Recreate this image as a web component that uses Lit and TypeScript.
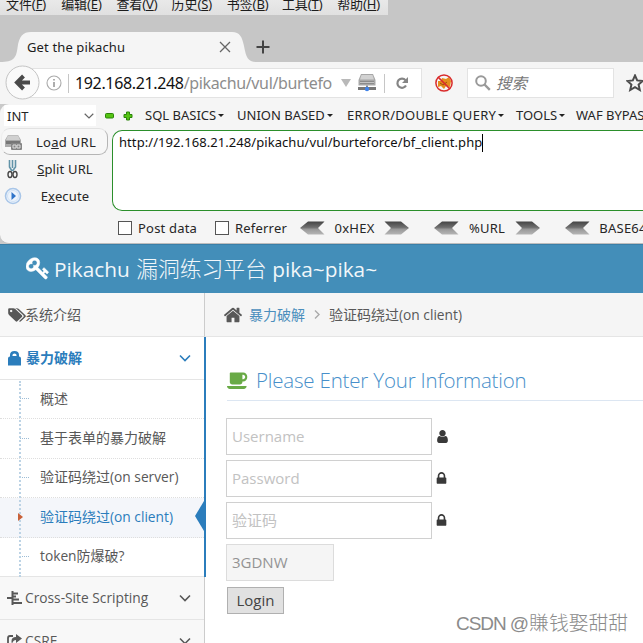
import { LitElement, html, svg, css } from "lit";
import { customElement } from "lit/decorators.js";

const icon = (cls: string, box: string, body: unknown) =>
  html`<svg class="ic ${cls}" viewBox=${box} preserveAspectRatio="none">${body}</svg>`;

const LOCK = svg`<path fill="currentColor" d="M640 768h512v-192q0-106-75-181t-181-75-181 75-75 181v192zm832 96v576q0 40-28 68t-68 28h-960q-40 0-68-28t-28-68v-576q0-40 28-68t68-28h32v-192q0-184 132-316t316-132 316 132 132 316v192h32q40 0 68 28t28 68z"/>`;
const USER = svg`<path fill="currentColor" d="M1536 1399q0 109-62.500 187t-150.500 78h-854q-88 0-150.500-78t-62.500-187q0-85 8.500-160.500t31.500-152 58.500-131 94-89 134.500-34.500q131 128 313 128t313-128q76 0 134.500 34.500t94 89 58.500 131 31.500 152 8.500 160.500zm-256-887q0 159-112.500 271.500t-271.500 112.500-271.500-112.500-112.500-271.500 112.500-271.500 271.500-112.500 271.500 112.500 112.500 271.500z"/>`;
const HOME = svg`<path fill="currentColor" d="M1472 992v480q0 26-19 45t-45 19h-384v-384h-256v384h-384q-26 0-45-19t-19-45v-480q0-1 .5-3t.5-3l575-474 575 474q1 2 1 6zm223-69l-62 74q-8 9-21 11h-3q-13 0-21-7l-692-577-692 577q-12 8-24 7-13-2-21-11l-62-74q-8-10-7-23.500t11-21.500l719-599q32-26 76-26t76 26l244 204v-195q0-14 9-23t23-9h192q14 0 23 9t9 23v408l219 182q10 8 11 21.500t-7 23.500z"/>`;
const TAGS = svg`<path fill="currentColor" d="M576 448q0-53-37.500-90.500t-90.500-37.500-90.500 37.500-37.500 90.500 37.500 90.500 90.500 37.500 90.500-37.500 37.500-90.500zm1067 576q0 53-37 90l-491 492q-39 37-91 37-53 0-90-37l-715-716q-38-37-64.500-101t-26.500-117v-416q0-52 38-90t90-38h416q53 0 117 26.500t102 64.500l715 714q37 39 37 91zm384 0q0 53-37 90l-491 492q-39 37-91 37-36 0-59-14t-53-45l470-470q37-37 37-90 0-52-37-91l-715-714q-38-38-102-64.500t-117-26.500h224q53 0 117 26.500t102 64.500l715 714q37 39 37 91z"/>`;
const COFFEE = svg`<path fill="currentColor" d="M1664 512q0-80-56-136t-136-56h-64v384h64q80 0 136-56t56-136zm-1664 768h1792q0 106-75 181t-181 75h-1280q-106 0-181-75t-75-181zm1856-768q0 159-112.500 271.500t-271.500 112.500h-64v32q0 92-66 158t-158 66h-704q-92 0-158-66t-66-158v-736q0-26 19-45t45-19h1152q159 0 271.500 112.500t112.500 271.500z"/>`;
const KEY = svg`<path fill="currentColor" stroke="currentColor" stroke-width="40" d="M832 512q0-80-56-136t-136-56-136 56-56 136q0 42 19 83-41-19-83-19-80 0-136 56t-56 136 56 136 136 56 136-56 56-136q0-42-19-83 41 19 83 19 80 0 136-56t56-136zm851 704q0 17-49 66t-66 49q-9 0-28.500-16t-36.500-33-38.500-40-24.500-26l-96 96 220 220q28 28 28 68 0 42-39 81t-81 39q-40 0-68-28l-671-671q-176 131-365 131-163 0-265.500-102.500t-102.500-265.500q0-160 95-313t248-248 313-95q163 0 265.500 102.500t102.500 265.500q0 189-131 365l355 355 96-96q-3-3-26-24.500t-40-38.500-33-36.500-16-28.500q0-17 49-66t66-49q13 0 23 10 6 6 46 44.500t82 79.500 86.500 86 73 78 28.500 41z"/>`;

@customElement("browser-chrome")
class BrowserChrome extends LitElement {
  static styles = css`
    :host { display: block; width: 643px; height: 104px; background: #c6c6c6; overflow: hidden; color: #1c1c1c;
      font-family: "Noto Sans", "Noto Sans CJK SC", sans-serif; }
    .ic { display: block; flex: none; }
    .menu { display: flex; width: 388px; height: 15px; box-sizing: border-box; padding-left: 6px;
      background: linear-gradient(#e9e9e9, #e0e0e0); }
    .menu span { flex: none; width: 55.2px; font: 13px/19px "Noto Sans", "Noto Sans CJK SC", sans-serif;
      margin-top: -5px; white-space: nowrap; letter-spacing: -0.1px; }
    .tabs { display: flex; height: 47px; align-items: flex-end; }
    .tab { position: relative; display: flex; align-items: center; width: 256px; height: 31px; }
    .shape { position: absolute; left: 0; top: 0; width: 256px; height: 31px; }
    .title { position: relative; margin-left: 27px; width: 192px; font-size: 13px; line-height: 18px; letter-spacing: 0.13px; }
    .close { position: relative; width: 12px; height: 12px; }
    .plus { width: 14px; height: 14px; margin: 0 0 8px 0; }
    .nav { display: flex; height: 42px; background: #f5f5f5; padding-left: 5px; }
    .back { position: relative; z-index: 1; width: 35px; height: 35px; margin-top: 3px; }
    .url { display: flex; flex: none; align-items: center; box-sizing: border-box; height: 30px; width: 401px; margin: 6px 0 0 -19px;
      padding-left: 24px; background: #fff; border: 1px solid #e3e3e3; }
    .info { width: 16px; height: 16px; }
    .sep { width: 1px; height: 19px; background: #c6c6c6; flex: none; }
    .sep.first { margin-left: 6px; }
    .addr { margin-left: 6px; flex: none; width: 264px; font-size: 16px; line-height: 22px; color: #111; white-space: nowrap; letter-spacing: -0.35px; }
    .addr i { font-style: normal; color: #8d8d8d; }
    .drop { width: 10px; height: 8px; margin-left: 2px; }
    .server { width: 18px; height: 18px; margin: 0 8px 0 7px; }
    .reload { width: 14px; height: 14px; margin-left: 10px; }
    .fox { width: 20px; height: 20px; margin: 11px 13px 0 12px; }
    .search { display: flex; flex: none; align-items: center; box-sizing: border-box; width: 147px; height: 30px; margin-top: 6px;
      background: #fff; border: 1px solid #e3e3e3; padding-left: 7px; font-size: 15.5px; color: #777; font-style: italic; }
    .search span { margin-top: -2px; }
    .mag { width: 16px; height: 16px; margin-right: 5px; }
    .star { width: 18px; height: 18px; margin: 12px 0 0 12px; }
  `;
  render() {
    const menu = [["文件", "F"], ["编辑", "E"], ["查看", "V"], ["历史", "S"], ["书签", "B"], ["工具", "T"], ["帮助", "H"]];
    return html`
      <div class="menu">${menu.map(([t, k]) => html`<span>${t}(<u>${k}</u>)</span>`)}</div>
      <div class="tabs">
        <div class="tab">
          ${icon("shape", "0 0 256 31", svg`<path fill="#f5f5f5" d="M0 31C14 31 16 27 17.500 17C19 5 23 1 31 1H232C240 1 242 6 244 15C246 26 248 31 256 31Z"/>`)}
          <span class="title">Get the pikachu</span>
          ${icon("close", "0 0 12 12", svg`<path d="M1 1L11 11M11 1L1 11" stroke="#666" stroke-width="1.3"/>`)}
        </div>
        ${icon("plus", "0 0 14 14", svg`<path d="M7 .5V13.500M.5 7H13.500" stroke="#444" stroke-width="2"/>`)}
      </div>
      <div class="nav">
        ${icon("back", "0 0 35 35", svg`<circle cx="17.500" cy="17.500" r="16.500" fill="#fafafa" stroke="#c4c4c4"/><path d="M25 17.500H13M18.500 11L12 17.500L18.500 24" fill="none" stroke="#4a4a4a" stroke-width="4"/>`)}
        <div class="url">
          ${icon("info", "0 0 16 16", svg`<circle cx="8" cy="8" r="7" fill="none" stroke="#aaa" stroke-width="1.100"/><path d="M8 7V12M8 4V5.600" stroke="#999" stroke-width="1.600"/>`)}
          <div class="sep first"></div>
          <div class="addr">192.168.21.248<i>/pikachu/vul/burtefo</i></div>
          ${icon("drop", "0 0 10 8", svg`<path d="M0 0H10L5 8Z" fill="#b9b9b9"/>`)}
          ${icon("server", "0 0 18 18", svg`<path d="M3 0H15L17.500 6V11.500H.5V6Z" fill="#a7a7a7"/><path d="M3.500 1H14.500L16 5.500H2Z" fill="#d2d2d2"/><rect x="2" y="7" width="14" height="3" fill="#8b8b8b"/><path d="M2 8.500H16" stroke="#ddd" stroke-width=".7"/><rect y="13" width="18" height="3" fill="#777"/><rect x="8" y="11.500" width="2" height="2" fill="#888"/><circle cx="9" cy="15" r="2.200" fill="#4083e8"/>`)}
          <div class="sep"></div>
          ${icon("reload", "0 0 14 14", svg`<path d="M10.500 4.200A4.600 4.600 0 1 0 11 9.500" fill="none" stroke="#858585" stroke-width="2.200"/><path d="M13 1V7H7Z" fill="#858585"/>`)}
        </div>
        ${icon("fox", "0 0 20 20", svg`<path d="M4 8L7 8L8 5L12 6L15 4L17 8L16 14L12 13L10 16L7 13L4 14Z" fill="#e48c1c"/><path d="M6 10L9 12L13 9" stroke="#9d4e10" fill="none"/><circle cx="10" cy="10" r="8.100" fill="none" stroke="#d92b2b" stroke-width="1.500"/><path d="M4 4L16 16" stroke="#d92b2b" stroke-width="1.700"/>`)}
        <div class="search">
          ${icon("mag", "0 0 16 16", svg`<circle cx="6" cy="6" r="4.800" fill="none" stroke="#999" stroke-width="2"/><path d="M9.500 9.500L14.800 14.800" stroke="#999" stroke-width="2.400"/>`)}
          <span>搜索</span>
        </div>
        ${icon("star", "0 0 18 18", svg`<path d="M9 1.500L11.200 6.400L16.600 7L12.600 10.600L13.800 16L9 13.200L4.200 16L5.400 10.600L1.400 7L6.800 6.400Z" fill="none" stroke="#4c4c4c" stroke-width="2"/>`)}
      </div>`;
  }
}

@customElement("hack-bar")
class HackBar extends LitElement {
  static styles = css`
    :host { display: block; width: 643px; height: 140px; background: #c9c9c9; overflow: hidden; color: #262626;
      font: 13px/18px "Noto Sans", sans-serif; white-space: nowrap; }
    .ic { display: block; flex: none; }
    .wrap { height: 139px; background: #f5f5f5; border-radius: 9px 0 0 9px; overflow: hidden; border-bottom: 1px solid #bdbdbd; }
    .top { display: flex; height: 23px; align-items: center; padding-left: 4px; }
    .sel { display: flex; flex: none; align-items: center; justify-content: space-between; box-sizing: border-box; width: 92px; height: 21px;
      background: #fff; padding: 0 2px 0 3px; }
    .chev { width: 10px; height: 6px; }
    .minus { width: 9px; height: 6px; margin-left: 9px; }
    .add { width: 10px; height: 10px; margin: 0 12px 0 9px; }
    .m { display: flex; align-items: center; flex: none; margin-top: -1px; }
    .m::after { content: ""; border: 3px solid transparent; border-top-color: #222; border-bottom: 0; margin-left: 2px; }
    .m1 { width: 92px; } .m2 { width: 110px; } .m3 { width: 169px; letter-spacing: .3px; } .m4 { width: 60px; } .m5 { width: 90px; }
    .mid { display: flex; height: 84px; }
    .left { width: 112px; flex: none; }
    .act { display: flex; align-items: center; box-sizing: border-box; height: 27px; padding-left: 3px; }
    .act.load { border: 1px solid #b5b5b5; border-left-color: #eee; border-top-color: #e2e2e2; border-radius: 9px; width: 107px; margin: 1px 0 0 1px;
      padding-left: 1px; background: #f7f7f7; }
    .act span { flex: none; width: 80px; text-align: center; margin-left: 2px; letter-spacing: .15px; }
    .act.load span { margin-left: 3px; letter-spacing: .3px; }
    .aic { width: 20px; height: 20px; }
    .box { box-sizing: border-box; flex: 1; height: 81px; margin-top: 3px; border: 1px solid #2b8f2b; border-right: 0; border-radius: 10px 0 0 10px;
      background: #fff; padding: 3px 0 0 6px; color: #111; display: flex; align-items: flex-start; }
    .txt { letter-spacing: .07px; margin-top: -1px; }
    .caret { width: 1px; height: 18px; background: #000; }
    .bot { display: flex; height: 32px; align-items: center; padding-left: 118px; padding-top: 1px; box-sizing: border-box; }
    .ck { box-sizing: border-box; width: 14px; height: 14px; border: 1px solid #555; background: #fff; flex: none; }
    .b1, .b2 { box-sizing: border-box; padding-left: 6px; flex: none; letter-spacing: .2px; }
    .b1 { width: 83px; } .b2 { width: 71px; }
    .arr { width: 25px; height: 14px; }
    .cv { text-align: center; flex: none; letter-spacing: .25px; }
    .w1 { width: 59px; } .w2 { width: 56px; } .w3 { width: 66px; }
    .gap { width: 25px; flex: none; }
  `;
  render() {
    const grad = svg`<defs><linearGradient id="g" x1="0" y1="0" x2="0" y2="1"><stop offset="0" stop-color="#444"/><stop offset=".45" stop-color="#6f6f6f"/><stop offset=".6" stop-color="#999"/><stop offset="1" stop-color="#b5b5b5"/></linearGradient></defs>`;
    const la = icon("arr", "0 0 25 14", svg`${grad}<path d="M0 7L8 .5H24.500L18 7L24.500 13.500H8Z" fill="url(#g)"/>`);
    const ra = icon("arr", "0 0 25 14", svg`${grad}<path d="M25 7L17 .5H.5L7 7L.5 13.500H17Z" fill="url(#g)"/>`);
    return html`<div class="wrap">
      <div class="top">
        <div class="sel"><span>INT</span>${icon("chev", "0 0 10 6", svg`<path d="M.7.8L5 5L9.300.8" fill="none" stroke="#666" stroke-width="1.200"/>`)}</div>
        ${icon("minus", "0 0 9 6", svg`<rect x=".5" y=".5" width="8" height="4.500" rx="1" fill="#55c413" stroke="#2a8508"/>`)}
        ${icon("add", "0 0 10 10", svg`<path d="M3.500 1H6.500V3.500H9V6.500H6.500V9H3.500V6.500H1V3.500H3.500Z" fill="#55c413" stroke="#2a8508"/>`)}
        <span class="m m1">SQL BASICS</span><span class="m m2">UNION BASED</span><span class="m m3">ERROR/DOUBLE QUERY</span><span class="m m4">TOOLS</span><span class="m m5">WAF BYPASS</span>
      </div>
      <div class="mid">
        <div class="left">
          <div class="act load">${icon("aic", "0 0 20 20", svg`<path d="M5 3H15L18 8V15H2V8Z" fill="#aaa"/><path d="M5 3.500H15L17 8H3Z" fill="#d0d0d0"/><rect x="3" y="9" width="14" height="3" fill="#777"/><rect x="8" y="11" width="11" height="7" rx="1" fill="#858585"/><path d="M10 13H13V16H10ZM14 13H17V16H14Z" fill="none" stroke="#ddd"/>`)}<span>Lo<u>a</u>d URL</span></div>
          <div class="act">${icon("aic", "0 0 20 20", svg`<path d="M6.500 1V8L9 12M12.500 1V8L9.500 12M9.500 1V9" fill="none" stroke="#6293a8" stroke-width="1.600"/><ellipse cx="7" cy="15.500" rx="2" ry="3" fill="none" stroke="#444" stroke-width="1.400"/><ellipse cx="12" cy="15.500" rx="2" ry="3" fill="none" stroke="#444" stroke-width="1.400"/>`)}<span><u>S</u>plit URL</span></div>
          <div class="act">${icon("aic", "0 0 20 20", svg`<circle cx="10" cy="10" r="7.500" fill="#edf4fc" stroke="#a9c6e8" stroke-width="1.600"/><circle cx="10" cy="10" r="5.500" fill="none" stroke="#d2e2f5"/><path d="M8.500 6L13 10L8.500 14Z" fill="#2f74c9"/>`)}<span>E<u>x</u>ecute</span></div>
        </div>
        <div class="box"><span class="txt">http://192.168.21.248/pikachu/vul/burteforce/bf_client.php</span><div class="caret"></div></div>
      </div>
      <div class="bot">
        <div class="ck"></div><span class="b1">Post data</span>
        <div class="ck"></div><span class="b2">Referrer</span>
        ${la}<span class="cv w1">0xHEX</span>${ra}<div class="gap"></div>
        ${la}<span class="cv w2">%URL</span>${ra}<div class="gap"></div>
        ${la}<span class="cv w3">BASE64</span>
      </div>
    </div>`;
  }
}

@customElement("pikachu-page")
class PikachuPage extends LitElement {
  static styles = css`
    :host { display: block; position: relative; width: 643px; height: 399px; background: #fff; overflow: hidden; color: #585858;
      font: 13.75px/20px "Open Sans", "Noto Sans CJK SC", sans-serif; white-space: nowrap; }
    .ic { display: block; flex: none; }
    .head { display: flex; align-items: center; height: 49px; box-sizing: border-box; background: #438eb9; color: #fff; padding-left: 26px;
      font-size: 20.8px; line-height: 30px; border-top: 1px solid #3a7fa8; }
    .key { width: 24px; height: 24px; margin: 0 4px 2px 0; }
    .ttl { font-weight: 400; opacity: .93; }
    .ttl b { font-weight: 300; font-size: 21.8px; margin-left: 1px; }
    .body { display: flex; height: 350px; }
    .side { width: 204px; flex: none; background: #f2f2f2; box-sizing: border-box; }
    .rail { width: 2px; flex: none; display: flex; flex-direction: column; }
    .r0 { height: 44px; } .r1 { height: 240px; background: #2b7dbc; } .r2 { flex: 1; }
    .r0, .r2 { border-left: 1px solid #ccc; } .r0 { background: #f5f5f5; box-sizing: border-box; border-bottom: 1px solid #e5e5e5; }
    .cjk { font-size: 14px; }
    .it { display: flex; align-items: center; height: 43px; box-sizing: border-box; background: #f8f8f8; padding: 0 13px 0 7px; border-bottom: 1px solid #e5e5e5; }
    .it.first { height: 44px; }
    .it.open { background: #fff; color: #2b7dbc; font-weight: 700; }
    .it .lab { flex: 1; }
    .tags { width: 19px; height: 16px; margin-right: -1px; }
    .bag { width: 15px; height: 15px; margin-right: 4px; }
    .tree { width: 15px; height: 14px; margin-right: 3px; }
    .share { width: 15px; height: 14px; margin-right: 3px; }
    .chev { width: 12px; height: 8px; }
    .sub { position: relative; background: #fff; height: 197px; }
    .sub::before { content: ""; position: absolute; z-index: 1; left: 19px; top: 1px; bottom: 0; border-left: 2px dotted #bcd3e5; }
    .row { position: relative; display: flex; align-items: center; height: 39.4px; box-sizing: border-box; padding: 0 0 1px 20px; border-bottom: 1px dotted #dedede; }
    .row:last-child { border-bottom: 1px solid #e5e5e5; }
    .row::before { content: ""; width: 9px; border-top: 1px dotted #9dbdd6; margin-right: 11px; }
    .row.on { background: #f4f6fa; color: #2b7dbc; }
    .row.on::before { width: 0; border: 4px solid transparent; border-left: 5px solid #c86139; border-right: 0; margin-left: -2px; margin-right: 17px; z-index: 2; }
    .row.on::after { content: ""; position: absolute; right: 0; top: 3px; border: 15px solid transparent; border-right: 9px solid #2b7dbc; border-left: 0; }
    .main { flex: 1; }
    .crumb { display: flex; align-items: center; height: 44px; box-sizing: border-box; background: #f5f5f5; border-bottom: 1px solid #e5e5e5; padding-left: 17px; }
    .home { width: 20px; height: 20px; margin-right: 6px; }
    .link { color: #4c8fbd; }
    .cr { width: 6px; height: 9px; margin: 0 9px 0 9px; }
    .form { padding-left: 20px; }
    .h { display: flex; align-items: center; height: 64px; box-sizing: border-box; padding-top: 23px; border-bottom: 1px solid #dce6f2; margin-left: 1px; color: #478fca; font-size: 20.5px; font-weight: 300; letter-spacing: -.19px; }
    .cup { width: 21px; height: 21px; color: #69aa46; margin: 2px 8px 0 0; }
    .f { display: flex; align-items: center; height: 37px; margin-bottom: 5px; }
    .h + .f { margin-top: 17px; }
    .in { box-sizing: border-box; width: 206px; height: 37px; border: 1px solid #d0d0d0; background: #fff; color: #c2c2c2; font-size: 15px; line-height: 34px; padding-left: 5px; margin-right: 3px; }
    .in.cap { width: 108px; background: #f5f5f5; color: #939393; border-color: #dcdcdc; }
    .fi { width: 15px; height: 15px; color: #393939; }
    .fi.lk { margin-left: -1px; }
    .btn { box-sizing: border-box; width: 57px; height: 27px; margin: 6px 0 0 1px; border: 1px solid #b0b0b0; background: #e1e1e1; color: #444; font-size: 15px; line-height: 25px; text-align: center; }
    .f.last { margin-bottom: 0; }
    .wm { position: absolute; left: 456px; top: 366px; font: 19.8px/26px "Liberation Sans", "Noto Sans CJK SC", sans-serif; font-weight: 300; color: #8b8b8b; }
    .wm span { font-size: 19px; letter-spacing: -1.05px; margin-right: 1px; }
  `;
  render() {
    const chev = icon("chev", "0 0 12 8", svg`<path d="M1 1.500L6 6.500L11 1.500" fill="none" stroke="currentColor" stroke-width="1.600"/>`);
    const rows: [string, string][] = [["概述", ""], ["基于表单的暴力破解", ""], ["验证码绕过", "(on server)"], ["验证码绕过", "(on client)"]];
    return html`
      <div class="head">${icon("key", "0 0 1792 1792", KEY)}<span class="ttl">Pikachu <b>漏洞练习平台</b> pika~pika~</span></div>
      <div class="body">
        <div class="side">
          <div class="it first">${icon("tags", "0 0 2048 1792", TAGS)}<span class="cjk lab">系统介绍</span></div>
          <div class="it open">${icon("bag", "0 0 15 15", svg`<path d="M1 14.500V7.500Q1 5.500 3 5.500V4Q3 0 7.500 0Q12 0 12 4V5.500Q14 5.500 14 7.500V14.500ZM5.500 5H9.500V4Q9.500 2.500 7.500 2.500Q5.500 2.500 5.500 4Z" fill="currentColor" fill-rule="evenodd"/>`)}<span class="cjk lab">暴力破解</span>${chev}</div>
          <div class="sub">
            ${rows.map(([a, b], i) => html`<div class="row ${i === 3 ? "on" : ""}"><span><span class="cjk">${a}</span>${b}</span></div>`)}
            <div class="row"><span>token<span class="cjk">防爆破</span>?</span></div>
          </div>
          <div class="it">${icon("tree", "0 0 15 14", svg`<path d="M0 7H5M5.500 0V14M6 2.500H11M6 5.500H9M6 8.500H12M6 12H15" fill="none" stroke="currentColor" stroke-width="2"/>`)}<span class="lab">Cross-Site Scripting</span>${chev}</div>
          <div class="it">${icon("share", "0 0 15 14", svg`<path d="M6 2H3Q1 2 1 4V11Q1 13 3 13H10Q12 13 12 11V9" fill="none" stroke="currentColor" stroke-width="1.800"/><path d="M9 0L15 4.500L9 9V6Q6 6 5 10Q3 3 9 3Z" fill="currentColor"/>`)}<span class="lab">CSRF</span>${chev}</div>
        </div>
        <div class="rail"><div class="r0"></div><div class="r1"></div><div class="r2"></div></div>
        <div class="main">
          <div class="crumb">${icon("home", "0 0 1792 1792", HOME)}<span class="cjk link">暴力破解</span>${icon("cr", "0 0 6 9", svg`<path d="M1 .5L5 4.500L1 8.500" fill="none" stroke="#aaa" stroke-width="1.400"/>`)}<span><span class="cjk">验证码绕过</span>(on client)</span></div>
          <div class="form">
            <div class="h">${icon("cup", "0 0 1920 1792", COFFEE)}<span>Please Enter Your Information</span></div>
            <div class="f"><div class="in">Username</div>${icon("fi", "0 0 1792 1792", USER)}</div>
            <div class="f"><div class="in">Password</div>${icon("fi lk", "0 0 1792 1792", LOCK)}</div>
            <div class="f"><div class="in">验证码</div>${icon("fi lk", "0 0 1792 1792", LOCK)}</div>
            <div class="f last"><div class="in cap">3GDNW</div></div>
            <div class="btn">Login</div>
          </div>
        </div>
      </div>
      <div class="wm"><span>CSDN @</span>賺钱娶甜甜</div>`;
  }
}

@customElement("app-root")
class AppRoot extends LitElement {
  static styles = css`:host { display: block; width: 643px; height: 643px; overflow: hidden; background: #fff; }`;
  render() {
    return html`<browser-chrome></browser-chrome><hack-bar></hack-bar><pikachu-page></pikachu-page>`;
  }
}
